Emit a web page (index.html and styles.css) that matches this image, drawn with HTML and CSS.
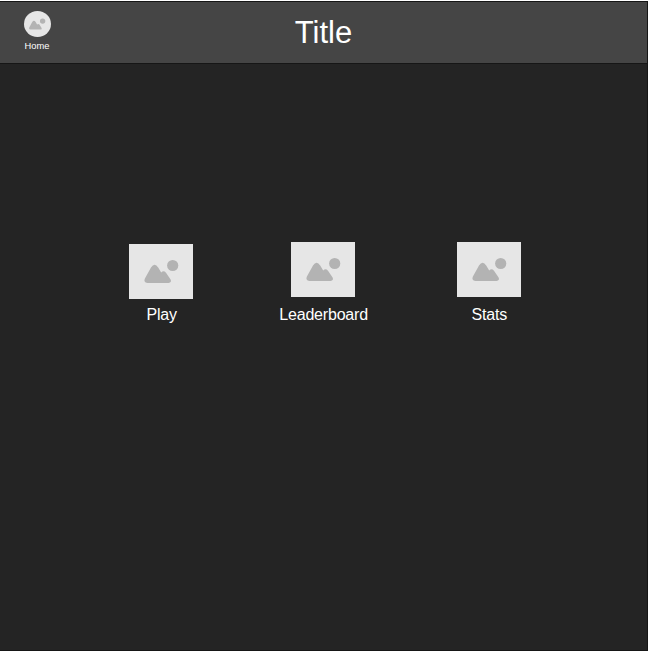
FILE: index.html
```
<!DOCTYPE html>
<html lang="en">
<head>
<meta charset="utf-8">
<title>Title</title>
<link rel="stylesheet" href="styles.css">
</head>
<body>
<svg class="defs" aria-hidden="true">
  <symbol id="picture" viewBox="0 0 64 55">
    <path d="M18.4 39Q14.2 38.4 15.9 34.6L22 23.4Q25.6 18 29.2 23.4L32.2 28.6Q34.6 26 37 28.8L41.6 35.6Q43 38.6 39.6 39Z"/>
    <circle cx="43.7" cy="21.5" r="5.6"/>
  </symbol>
</svg>
<div class="app">
  <header class="header">
    <a class="home">
      <span class="avatar"><svg class="avatar-icon" viewBox="14 15 36 25"><use href="#picture" width="64" height="55"/></svg></span>
      <span class="home-label">Home</span>
    </a>
    <h1 class="title">Title</h1>
  </header>
  <main class="menu">
    <a class="item item-play"><svg class="thumb"><use href="#picture" width="64" height="55"/></svg><span class="label">Play</span></a>
    <a class="item"><svg class="thumb"><use href="#picture" width="64" height="55"/></svg><span class="label">Leaderboard</span></a>
    <a class="item"><svg class="thumb"><use href="#picture" width="64" height="55"/></svg><span class="label">Stats</span></a>
  </main>
</div>
</body>
</html>
```
FILE: styles.css
```
* { box-sizing: border-box; }
body {
  margin: 0;
  height: 652px;
  padding: 1px 0;
  overflow: hidden;
  background: #fff;
  color: #fff;
  font-family: "Liberation Sans", Arial, sans-serif;
}
.defs { display: none; }
.app {
  height: 650px;
  background: #242424;
  border: 1px solid #161616;
  border-left: 0;
}
.header {
  display: grid;
  grid-template-columns: 74px 1fr 74px;
  height: 62px;
  background: #454545;
  border-bottom: 1px solid #161616;
}
.home {
  display: flex;
  flex-direction: column;
  align-items: center;
  padding-top: 9px;
}
.avatar {
  display: flex;
  align-items: center;
  justify-content: center;
  width: 27px;
  height: 26px;
  border-radius: 50%;
  background: #e6e6e6;
}
.avatar-icon {
  width: 18px;
  height: 12px;
  fill: #b3b3b3;
}
.home-label {
  margin-top: 4px;
  font-size: 9.33px;
  line-height: 11px;
}
.title {
  margin: 0;
  font-size: 31px;
  font-weight: 400;
  line-height: 61px;
  text-align: center;
}
.menu {
  display: grid;
  grid-template-columns: 162.6px 161.4px 170px;
  padding: 178px 0 0 80px;
}
.item {
  display: flex;
  flex-direction: column;
  align-items: center;
  gap: 8px;
  font-size: 16px;
  line-height: 20px;
}
.item-play {
  gap: 6px;
  padding-top: 2px;
}
.label {
  padding-left: 0.6px;
  letter-spacing: -0.2px;
}
.thumb {
  width: 64px;
  height: 55px;
  background: #e6e6e6;
  fill: #b3b3b3;
}
```
